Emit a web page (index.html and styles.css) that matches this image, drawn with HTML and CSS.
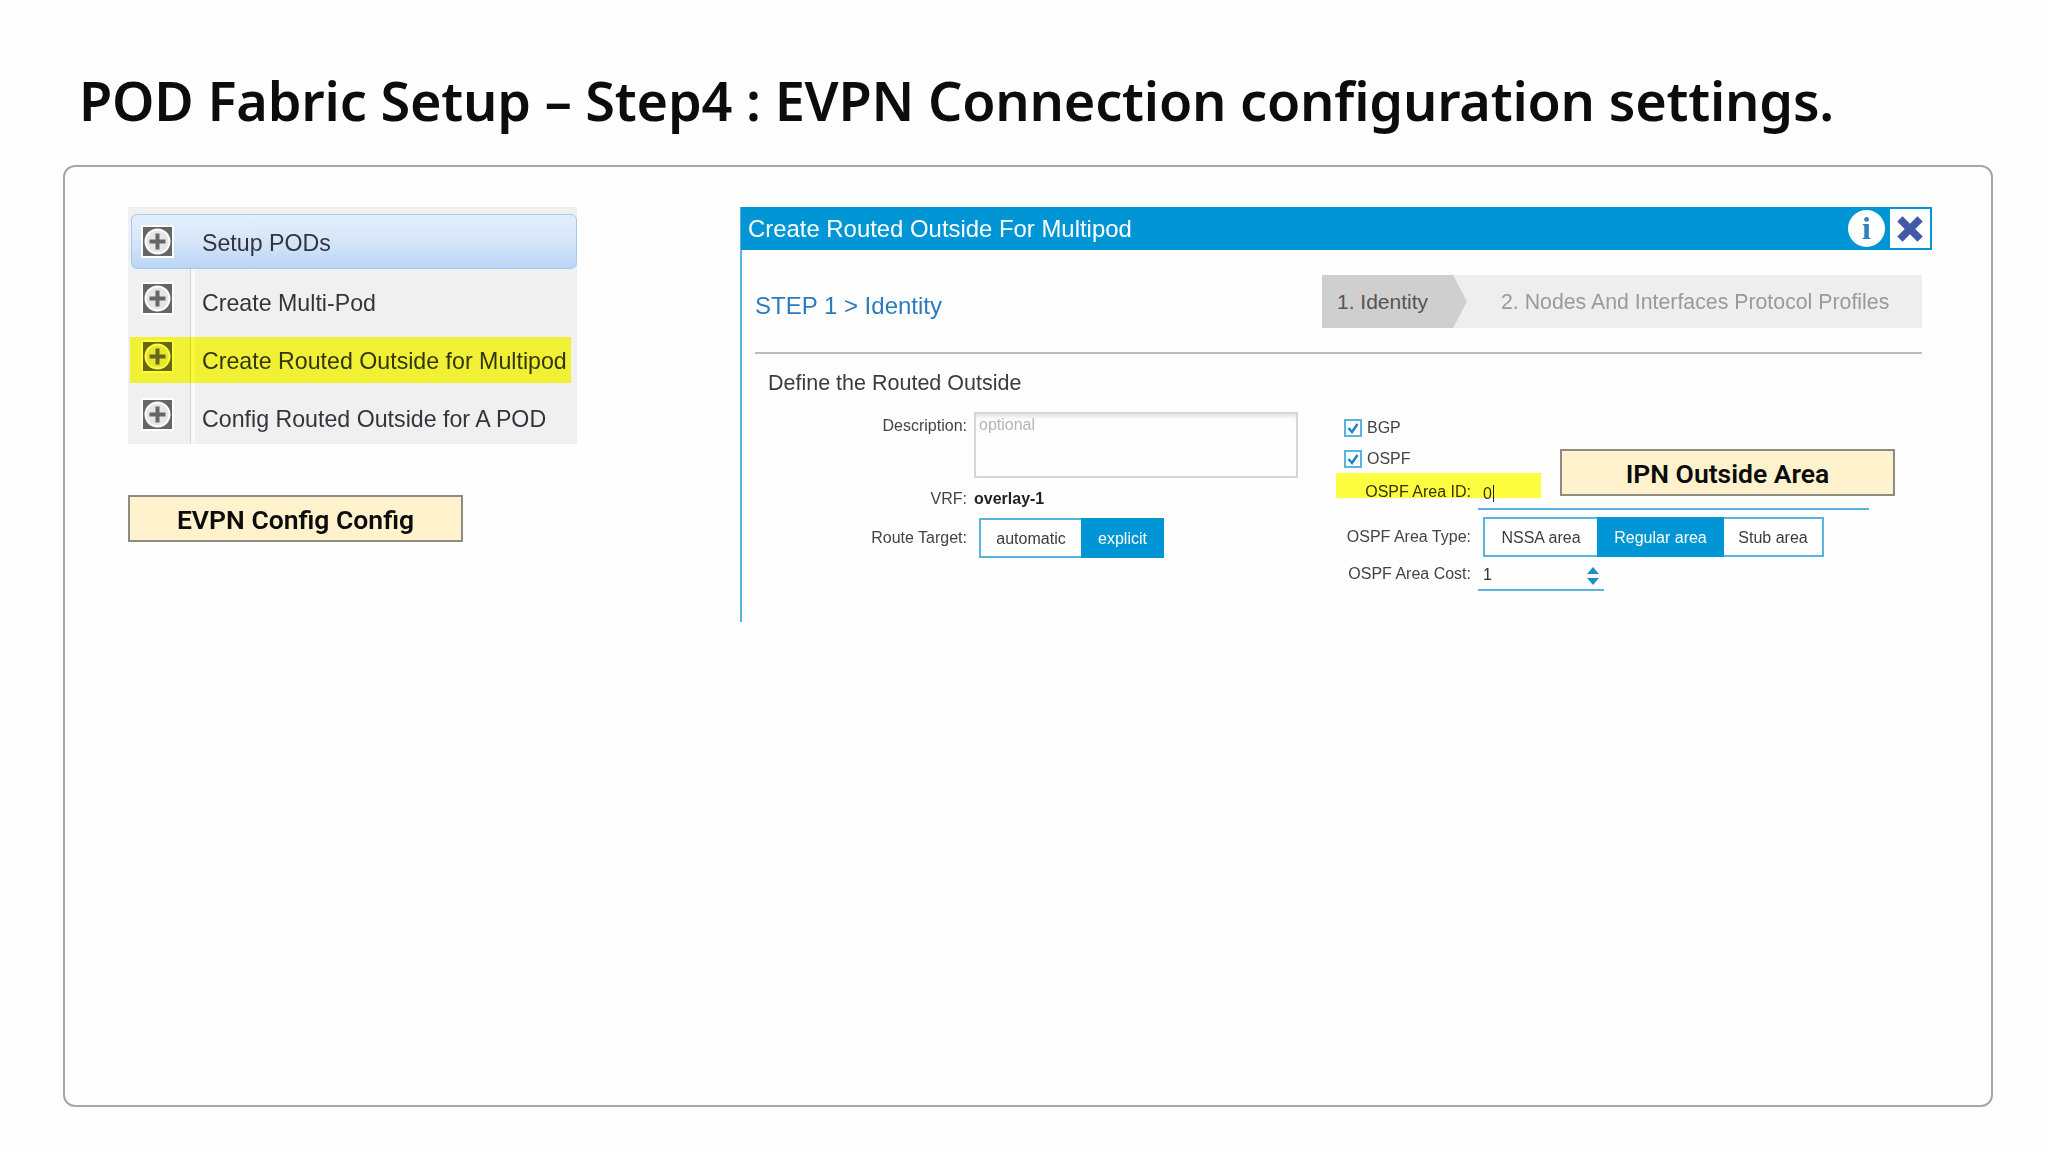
FILE: index.html
```html
<!DOCTYPE html>
<html lang="en">
<head>
    <meta charset="UTF-8">
    <title>POD Fabric Setup</title>
    <link rel="stylesheet" href="styles.css">
</head>
<body>
    <h1 class="title">POD Fabric Setup – Step4 : EVPN Connection configuration settings.</h1>
    <div class="panel">
        <div class="left-col">
            <ul class="menu">
                <li class="menu-item selected">
                    <span class="icon-cell"><svg class="plus-icon" viewBox="0 0 33 33"><rect x="1" y="1" width="31" height="31" fill="#666" stroke="#fff" stroke-width="2"/><circle cx="16.5" cy="16.5" r="12" fill="#e6e6e6" stroke="#fff" stroke-width="2"/><path d="M16.5 8.5v16M8.500 16.5h16" stroke="#666" stroke-width="4"/></svg></span>
                    <span class="menu-label">Setup PODs</span>
                </li>
                <li class="menu-item">
                    <span class="icon-cell"><svg class="plus-icon" viewBox="0 0 33 33"><rect x="1" y="1" width="31" height="31" fill="#666" stroke="#fff" stroke-width="2"/><circle cx="16.5" cy="16.5" r="12" fill="#e6e6e6" stroke="#fff" stroke-width="2"/><path d="M16.5 8.5v16M8.500 16.5h16" stroke="#666" stroke-width="4"/></svg></span>
                    <span class="menu-label">Create Multi-Pod</span>
                </li>
                <li class="menu-item">
                    <span class="icon-cell"><svg class="plus-icon" viewBox="0 0 33 33"><rect x="1" y="1" width="31" height="31" fill="#666" stroke="#fff" stroke-width="2"/><circle cx="16.5" cy="16.5" r="12" fill="#e6e6e6" stroke="#fff" stroke-width="2"/><path d="M16.5 8.5v16M8.500 16.5h16" stroke="#666" stroke-width="4"/></svg></span>
                    <span class="menu-label">Create Routed Outside for Multipod</span>
                    <span class="menu-mark"></span>
                </li>
                <li class="menu-item">
                    <span class="icon-cell"><svg class="plus-icon" viewBox="0 0 33 33"><rect x="1" y="1" width="31" height="31" fill="#666" stroke="#fff" stroke-width="2"/><circle cx="16.5" cy="16.5" r="12" fill="#e6e6e6" stroke="#fff" stroke-width="2"/><path d="M16.5 8.5v16M8.500 16.5h16" stroke="#666" stroke-width="4"/></svg></span>
                    <span class="menu-label">Config Routed Outside for A POD</span>
                </li>
            </ul>
            <div class="callout evpn-callout">EVPN Config Config</div>
        </div>

        <div class="dialog">
            <div class="dialog-head">
                <span class="dialog-title">Create Routed Outside For Multipod</span>
                <span class="info-btn">i</span>
                <span class="close-btn"><svg viewBox="0 0 32 32" width="34" height="34"><path d="M4 9l5-5 7 7 7-7 5 5-7 7 7 7-5 5-7-7-7 7-5-5 7-7z" fill="#4359a8"/></svg></span>
            </div>
            <div class="dialog-body">
                <div class="step-row">
                    <span class="step-name">STEP 1 &gt; Identity</span>
                    <div class="tabs">
                        <span class="tab active">1. Identity</span>
                        <span class="tab">2. Nodes And Interfaces Protocol Profiles</span>
                    </div>
                </div>
                <div class="section-name">Define the Routed Outside</div>
                <div class="form">
                    <div class="form-left">
                        <div class="row desc-row">
                            <label class="lbl">Description:</label>
                            <div class="textarea">optional</div>
                        </div>
                        <div class="row vrf-row">
                            <label class="lbl">VRF:</label>
                            <b class="vrf-value">overlay-1</b>
                        </div>
                        <div class="row route-row">
                            <label class="lbl">Route Target:</label>
                            <div class="seg route-seg">
                                <span class="seg-btn auto-btn">automatic</span>
                                <span class="seg-btn on explicit-btn">explicit</span>
                            </div>
                        </div>
                    </div>
                    <div class="form-right">
                        <div class="check-row">
                            <svg class="check" viewBox="0 0 18 18"><rect x="1" y="1" width="16" height="16" fill="#fff" stroke="#5ab4e0" stroke-width="2"/><path d="M4.500 9l3.500 4 5.500-8" fill="none" stroke="#1b86c6" stroke-width="2.500"/></svg>
                            <span>BGP</span>
                        </div>
                        <div class="check-row">
                            <svg class="check" viewBox="0 0 18 18"><rect x="1" y="1" width="16" height="16" fill="#fff" stroke="#5ab4e0" stroke-width="2"/><path d="M4.500 9l3.500 4 5.500-8" fill="none" stroke="#1b86c6" stroke-width="2.500"/></svg>
                            <span>OSPF</span>
                        </div>
                        <div class="row area-id-row">
                            <label class="lbl short">OSPF Area ID:</label>
                            <div class="line-input area-input"><span class="caret">0</span></div>
                            <span class="area-mark"></span>
                        </div>
                        <div class="row area-type-row">
                            <label class="lbl short">OSPF Area Type:</label>
                            <div class="seg type-seg">
                                <span class="seg-btn nssa-btn">NSSA area</span>
                                <span class="seg-btn on regular-btn">Regular area</span>
                                <span class="seg-btn stub-btn">Stub area</span>
                            </div>
                        </div>
                        <div class="row cost-row">
                            <label class="lbl short">OSPF Area Cost:</label>
                            <div class="line-input cost-input">1
                                <svg class="spinner" viewBox="0 0 12 18" width="12" height="18"><path d="M6 0l6 7H0zM0 11h12l-6 7z" fill="#1b8fd0"/></svg>
                            </div>
                        </div>
                        <div class="callout ipn-callout">IPN Outside Area</div>
                    </div>
                </div>
            </div>
        </div>
    </div>
</body>
</html>
```

FILE: styles.css
```css
* {
    box-sizing: border-box;
}
body {
    margin: 0;
    width: 2048px;
    height: 1152px;
    padding: 0 55px 0 63px;
    background-color: #fefefe;
    font-family: "Liberation Sans", Arial, sans-serif;
    color: #444;
    overflow: hidden;
}
.title {
    margin: 0;
    height: 165px;
    padding: 61px 0 0 16px;
    font-family: "Noto Sans", sans-serif;
    font-size: 54px;
    line-height: 78px;
    font-weight: 600;
    letter-spacing: -0.2px;
    color: #0c0c0c;
    white-space: nowrap;
}
.panel {
    display: flex;
    height: 942px;
    padding: 40px 58px 0 63px;
    border: 2px solid #a6a6a6;
    border-radius: 12px;
    background-color: #fefefe;
}

/* left side */
.left-col {
    width: 612px;
    flex-shrink: 0;
}
.menu {
    width: 449px;
    height: 237px;
    margin: 0;
    padding: 7px 0 0;
    list-style: none;
    background-color: #f0f0f1;
}
.menu-item {
    position: relative;
    display: flex;
    height: 58px;
    font-size: 23.2px;
    color: #33353b;
}
.icon-cell {
    width: 62px;
    flex-shrink: 0;
    display: flex;
    align-items: center;
    padding-left: 13px;
}
.plus-icon {
    width: 33px;
    height: 33px;
}
.menu-label {
    flex: 1;
    padding: 9px 0 0 11px;
    line-height: 50px;
    border-left: 1px solid #d4d4d4;
    box-shadow: inset 4px 0 #f9f9f9;
    white-space: nowrap;
}
.menu-item.selected {
    height: 55px;
    margin-left: 3px;
    border: 1px solid #a9c9ec;
    border-radius: 6px;
    background: linear-gradient(#e4effc, #d3e4f9 55%, #b9d5f5);
}
.selected .icon-cell {
    width: 58px;
    padding-left: 9px;
}
.selected .menu-label {
    padding-top: 3px;
    padding-left: 12px;
    border-left: none;
    box-shadow: none;
}
.menu-mark {
    position: absolute;
    left: 2px;
    top: 10px;
    width: 441px;
    height: 46px;
    background-color: #ffff38;
    mix-blend-mode: multiply;
}
.callout {
    height: 47px;
    border: 2px solid #8e8c82;
    background-color: #fff2cc;
    font-family: Roboto, sans-serif;
    font-size: 26.500px;
    font-weight: 600;
    line-height: 45px;
    text-align: center;
    color: #0c0c0c;
    white-space: nowrap;
}
.evpn-callout {
    width: 335px;
    margin-top: 51px;
}

/* dialog */
.dialog {
    width: 1192px;
    height: 415px;
    border-left: 2px solid #5ab4e0;
}
.dialog-head {
    display: flex;
    align-items: center;
    height: 43px;
    padding: 0 2px 0 7px;
    margin-left: -1px;
    background-color: #0096d6;
    color: #fff;
}
.dialog-title {
    flex: 1;
    font-size: 23.9px;
}
.info-btn {
    width: 37px;
    height: 37px;
    border-radius: 50%;
    margin-right: 5px;
    background-color: #fff;
    color: #2f7fc1;
    font-family: "Liberation Serif", serif;
    font-size: 32px;
    font-weight: bold;
    line-height: 37px;
    text-align: center;
}
.close-btn {
    display: flex;
    align-items: center;
    justify-content: center;
    width: 40px;
    height: 39px;
    background-color: #fff;
}
.dialog-body {
    padding: 25px 10px 0 13px;
}
.step-row {
    display: flex;
    justify-content: space-between;
    height: 79px;
    border-bottom: 2px solid #bdbdbd;
}
.step-name {
    font-size: 24px;
    line-height: 62px;
    color: #2a7cc0;
}
.tabs {
    display: flex;
    width: 600px;
    height: 53px;
    background-color: #eeeeef;
    font-size: 21.3px;
    color: #9a9a9a;
}
.tab {
    padding-left: 34px;
    line-height: 55px;
    white-space: nowrap;
}
.tab.active {
    width: 145px;
    padding-left: 15px;
    font-size: 21px;
    line-height: 53px;
    background-color: #cfcfcf;
    color: #555;
    clip-path: polygon(0 0, 131px 0, 145px 50%, 131px 100%, 0 100%);
}
.section-name {
    height: 58px;
    padding: 14px 0 0 13px;
    font-size: 21.5px;
    line-height: 30px;
    color: #3c3c3c;
}
.form {
    display: flex;
}
.form-left {
    width: 589px;
    flex-shrink: 0;
}
.form-right {
    position: relative;
    padding-top: 7px;
}
.row {
    display: flex;
}
.lbl {
    width: 212px;
    margin-right: 7px;
    flex-shrink: 0;
    font-size: 16px;
    text-align: right;
    white-space: nowrap;
}
.desc-row .lbl {
    padding-top: 5px;
}
.textarea {
    width: 324px;
    height: 66px;
    padding: 2px 3px;
    border: 2px solid #d6d6d6;
    box-shadow: inset 0 5px 5px -3px #dcdcdc;
    font-size: 16px;
    color: #b5b5b5;
}
.vrf-row {
    height: 40px;
    padding-top: 12px;
    line-height: 18px;
}
.vrf-value {
    font-size: 16px;
    color: #222;
}
.route-seg {
    margin-left: 5px;
}
.route-row .lbl {
    padding-top: 11px;
}
.seg {
    display: flex;
    height: 40px;
    border: 2px solid #5ab4e0;
    background-color: #fff;
    font-size: 16px;
    line-height: 38px;
    color: #3c3c3c;
    text-align: center;
}
.seg-btn.on {
    margin: -2px -2px -2px 0;
    line-height: 42px;
    background-color: #0096d6;
    color: #fff;
}
.auto-btn {
    width: 100px;
}
.explicit-btn {
    width: 83px;
}
.check-row {
    display: flex;
    align-items: center;
    height: 17px;
    margin-bottom: 14px;
    gap: 5px;
    font-size: 16px;
}
.check {
    width: 18px;
    height: 18px;
}
.lbl.short {
    width: 127px;
}
.area-id-row {
    position: relative;
    height: 37px;
    margin-top: -8px;
    padding-top: 10px;
}
.area-id-row .lbl {
    color: #33330a;
}
.line-input {
    border-bottom: 2px solid #5ab4e0;
    font-size: 16px;
    color: #333;
    padding-left: 5px;
}
.area-input {
    width: 391px;
    margin-top: -3px;
    padding-top: 5px;
}
.caret {
    padding-right: 1px;
    border-right: 1px solid #222;
}
.area-mark {
    position: absolute;
    left: -8px;
    top: 0;
    width: 205px;
    height: 25px;
    background-color: #ffff40;
    mix-blend-mode: multiply;
}
.area-type-row {
    height: 40px;
    margin-top: 7px;
}
.area-type-row .lbl {
    padding-top: 11px;
}
.type-seg {
    margin-left: 5px;
    width: 341px;
}
.nssa-btn {
    width: 112px;
}
.seg-btn.regular-btn {
    width: 127px;
    margin-right: 0;
}
.stub-btn {
    width: 98px;
}
.cost-row {
    height: 34px;
    padding-top: 8px;
}
.cost-input {
    position: relative;
    width: 126px;
    padding-top: 1px;
}
.spinner {
    position: absolute;
    right: 5px;
    top: 2px;
}
.ipn-callout {
    position: absolute;
    left: 216px;
    top: 37px;
    width: 335px;
}
```
